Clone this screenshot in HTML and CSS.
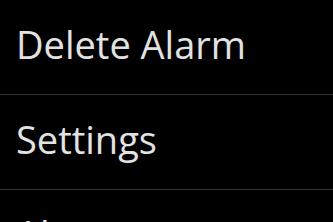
FILE: index.html
```html
<!DOCTYPE html>
<html lang="en">

<head>
    <meta charset="UTF-8">
    <meta name="viewport" content="width=device-width, initial-scale=1.0">
    <title>Alarm Menu</title>
    <link rel="stylesheet" href="styles.css">
</head>

<body>
    <ul class="menu">
        <li class="menu-item">Delete Alarm</li>
        <li class="menu-item">Settings</li>
        <li class="menu-item">About</li>
    </ul>
</body>

</html>
```

FILE: styles.css
```css
* {
    margin: 0;
    padding: 0;
    box-sizing: border-box;
}

body {
    background-color: #000;
    color: #e2e2e2;
    font-family: 'Open Sans', 'Noto Sans', sans-serif;
    overflow: hidden;
}

.menu {
    list-style: none;
}

.menu-item {
    height: 95px;
    display: flex;
    align-items: center;
    padding: 0 0 6px 16px;
    font-size: 38px;
    border-bottom: 1px solid #333;
    white-space: nowrap;
}
```
